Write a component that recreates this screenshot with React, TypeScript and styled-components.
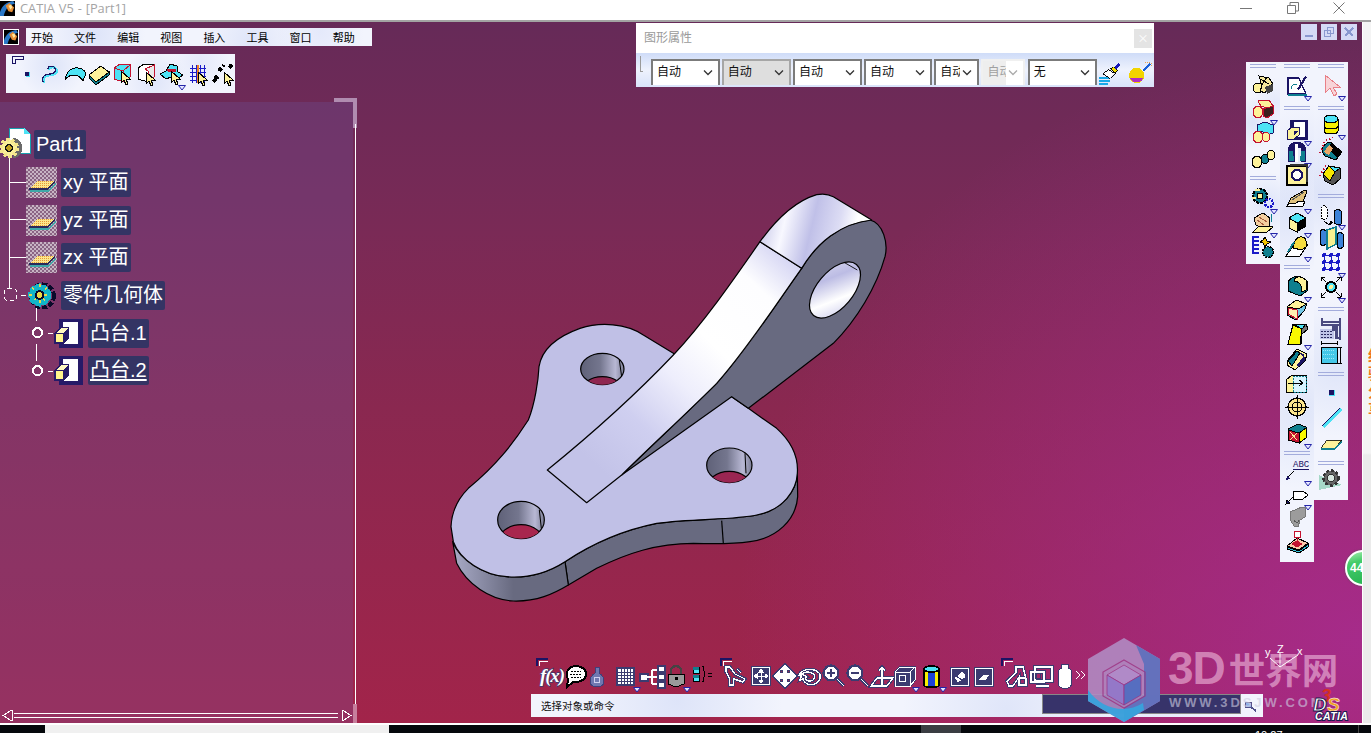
import React from 'react';
import styled, { createGlobalStyle } from 'styled-components';

const N = '#1b1464', K = '#000', C = '#4de3f5', Y = '#fdf29a', T = '#0f7f8f', R = '#c41230', W = '#fff', B = '#1a1ac8', D = '#3b3b70';
const SANS = '"Liberation Sans", "Noto Sans CJK SC", sans-serif';

const Global = createGlobalStyle`
  html, body { margin: 0; padding: 0; background: #fff; }
  body { font-family: ${SANS}; }
`;

const Page = styled.div`
  position: relative; width: 1371px; height: 733px; overflow: hidden;
  display: flex; flex-direction: column; background: #fff;
`;
const TitleBar = styled.header`
  height: 20px; flex: none; display: flex; align-items: center; background: #fff;
  border-bottom: 2px solid #a3a3a3;
`;
const TitleIcon = styled.svg`width: 15px; height: 15px; flex: none; margin-bottom: 4px;`;
const TitleText = styled.span`
  margin-left: 5px; font-size: 12.8px; color: #a4a4a4; white-space: pre; margin-bottom: 4px; word-spacing: .6px;
  font-family: "Open Sans", ${SANS};
`;
const WinGlyphs = styled.div`
  margin-left: auto; display: flex; align-items: center; height: 20px; width: 131px;
  margin-bottom: 4px;
`;
const WinGlyph = styled.svg<{ $ml: number }>`width: 12px; height: 12px; margin-left: ${p => p.$ml}px; flex: none;`;
const Main = styled.div`flex: 1; display: flex; min-height: 0;`;
const Viewport = styled.main`
  position: relative; width: 1362px; flex: none; overflow: hidden;
  background:
    radial-gradient(ellipse 46% 85% at 100% 88%, rgba(168,44,150,.84), rgba(168,44,150,0)),
    linear-gradient(180deg, #662a58 0%, #7a2a56 30%, #8a2850 55%, #a2244a 100%);
`;
const Strip = styled.aside`
  flex: 1; background: linear-gradient(90deg, #fff 0 1px, transparent 1px), linear-gradient(180deg, #f4f4f4 0 431px, #ebebeb 433px);
  position: relative; overflow: hidden;
`;
const StripNote = styled.div`
  position: absolute; left: 6px; top: 324px; width: 16px; color: #f07818; font-size: 15px; line-height: 18px; font-weight: 700;
  font-family: "Noto Sans CJK SC", sans-serif;
`;
const Bubble = styled.div`
  position: absolute; left: 1345px; top: 528px; width: 36px; height: 36px; border-radius: 50%;
  background: linear-gradient(165deg, #a8eeb0, #45cc6a 30%, #22b04e);
  border: 2px solid #fff; box-shadow: 0 0 2px #555; box-sizing: border-box;
  color: #fff; font-size: 12px; font-weight: 700; padding: 9px 0 0 3px; line-height: 14px;
`;
const Taskbar = styled.footer`
  height: 10px; flex: none; background: #05080c; border-top: 2px solid #fff; box-sizing: border-box;
  display: flex; overflow: hidden; color: #fff; font-size: 11px;
`;
const TaskBlank = styled.div`width: 344px; margin-left: 45px; background: #f0f0f0; flex: none;`;
const TaskActive = styled.div`width: 40px; margin-left: 532px; background: #3a3d42; flex: none;`;
const Clock = styled.div`margin-left: 294px; width: 103px; line-height: 13px; padding-top: 4px; border-right: 1px solid #444; flex: none;`;

const Mottled = `
  background:
    radial-gradient(circle at 20% 30%, rgba(205,215,245,.55), transparent 18%),
    radial-gradient(circle at 65% 70%, rgba(205,215,245,.5), transparent 22%),
    radial-gradient(circle at 85% 20%, rgba(215,222,248,.5), transparent 15%),
    #f2f4fd;
`;
const MenuIcon = styled.svg`position: absolute; left: 3px; top: 7px; width: 16px; height: 16px; border: 1px solid #fff; box-sizing: border-box;`;
const MenuBar = styled.nav`
  position: absolute; left: 26px; top: 6px; width: 346px; height: 18px; ${Mottled}
  display: flex; align-items: center; padding-left: 5px; gap: 21.1px; box-sizing: border-box;
`;
const MenuItem = styled.span`width: 22px; font-size: 11px; color: #000; white-space: nowrap; font-family: "Noto Sans CJK SC", sans-serif;`;

const HBar = styled.div<{ $l: number; $t: number; $w: number; $h: number; $light?: boolean }>`
  position: absolute; left: ${p => p.$l}px; top: ${p => p.$t}px; width: ${p => p.$w}px; height: ${p => p.$h}px;
  display: flex; align-items: center; ${p => p.$light ? Mottled : ''}
`;
const Corner = styled.svg<{ $t?: number; $l: number }>`
  position: absolute; left: ${p => p.$l}px; top: ${p => p.$t ?? 0}px; width: 13px; height: 9px;
`;
const Tool = styled.div<{ $mt?: number; $ml?: number; $s?: number }>`
  position: relative; flex: none; width: ${p => p.$s ?? 24}px; height: ${p => p.$s ?? 24}px;
  margin-top: ${p => p.$mt ?? 0}px; margin-left: ${p => p.$ml ?? 0}px;
  svg.ico { display: block; width: 100%; height: 100%; overflow: visible; }
`;
const Caret = styled.svg`position: absolute; right: -3px; bottom: -5px; width: 8px; height: 6px;`;

const Column = styled.div<{ $h: number }>`
  width: 34px; height: ${p => p.$h}px; ${Mottled} display: flex; flex-direction: column; align-items: center;
`;
const Sep = styled.div<{ $mt: number }>`
  width: 26px; height: 2px; flex: none; margin-top: ${p => p.$mt}px;
  border-top: 1px solid #a3acdc; border-bottom: 1px solid #a3acdc;
`;
const RightDock = styled.div`position: absolute; left: 1246px; top: 40px; display: flex; align-items: flex-start;`;

const WinBtns = styled.div`position: absolute; left: 1301px; top: 2px; display: flex; gap: 4px;`;
const WinBtn = styled.svg`width: 16px; height: 16px; background: #d5daf6;`;

const Panel = styled.section`
  position: absolute; left: 0; top: 80px; width: 353px; height: 621px;
  background: rgba(110,100,180,.22); padding-top: 24px; box-sizing: border-box;
  &::before {
    content: ''; position: absolute; left: 334px; top: -4px; width: 19px; height: 26px;
    border-top: 4px solid #b08cb0; border-right: 4px solid #b08cb0;
  }
  &::after {
    content: ''; position: absolute; left: 353px; top: 602px; width: 4px; height: 19px; background: #c77e9c;
  }
`;
const EdgeLine = styled.div`position: absolute; left: 355px; top: 22px; width: 1px; height: 580px; background: #fff;`;
const Tree = styled.ul`list-style: none; margin: 0; padding: 0; display: grid; grid-auto-rows: 37.7px; position: relative;`;
const TreeRow = styled.li<{ $indent: number }>`
  display: flex; align-items: center; padding-left: ${p => p.$indent}px; position: relative; min-width: 0;
`;
const TreeIcon = styled.svg<{ $w: number; $gap: number }>`
  width: ${p => p.$w}px; height: 31px; flex: none; margin-right: ${p => p.$gap}px; overflow: visible;
`;
const Label = styled.span<{ $under?: boolean }>`
  background: #343464; color: #fff; height: 29px; line-height: 29px; border-radius: 2px;
  font-size: 20px; padding: 0 2px; white-space: nowrap; font-family: ${SANS};
  text-decoration: ${p => p.$under ? 'underline' : 'none'}; text-underline-offset: 2px;
`;
const Links = styled.svg`position: absolute; left: 0; top: -126px; width: 100px; height: 400px; pointer-events: none;`;
const ScrollLine = styled.svg`position: absolute; left: 2px; bottom: 1px; width: 350px; height: 12px;`;

const PropBar = styled.div`
  position: absolute; left: 636px; top: 1px; width: 518px; height: 64px; display: flex; flex-direction: column;
`;
const PropHead = styled.div`
  height: 30px; background: #fff; display: flex; align-items: center; padding: 0 2px 0 8px; flex: none; box-sizing: border-box;
  font-size: 12px; color: #9a9a9a; font-family: "Noto Sans CJK SC", sans-serif;
`;
const PropTitle = styled.span`margin-top: -4px;`;
const PropClose = styled.div`
  margin-left: auto; width: 18px; height: 19px; background: #e4e4e4; color: #fff; text-align: center; line-height: 18px; font-size: 11px;
`;
const PropBody = styled.div`
  flex: 1; display: flex; align-items: flex-end; padding: 0 0 2px 15px; gap: 2.3px; position: relative;
  background: linear-gradient(180deg, #cfdcf8, #eef2fd 50%, #d9e3fa);
`;
const Grip = styled.i`position: absolute; left: 4px; top: 3px; height: 16px; border-left: 1px solid #9a9a9a; border-bottom: 1px solid #9a9a9a; width: 3px; box-sizing: border-box;`;
const Combo = styled.div<{ $w: number; $mode?: 'on' | 'off' }>`
  width: ${p => p.$w}px; height: 26px; box-sizing: border-box; flex: none; display: flex; align-items: center;
  border: 2px solid ${p => p.$mode === 'on' ? '#a6a6a6' : p.$mode === 'off' ? '#f0f0f0' : '#7b7b7b'}; border-bottom: 0;
  background: ${p => p.$mode === 'on' ? '#dedede' : '#fff'};
  color: ${p => p.$mode === 'off' ? '#a0a0a0' : '#111'}; font-size: 12px; font-family: "Noto Sans CJK SC", sans-serif;
`;
const ComboText = styled.span<{ $w: number; $mode?: 'on' | 'off' }>`
  width: ${p => p.$w}px; height: 100%; line-height: 19px; overflow: hidden; white-space: nowrap; padding-left: 4px; box-sizing: border-box; flex: none;
  background: ${p => p.$mode === 'off' ? '#eeeeee' : 'transparent'};
`;
const Chevron = styled.svg`width: 10px; height: 6px; margin-left: auto; margin-right: 5px; flex: none;`;

const Status = styled.div`
  position: absolute; left: 531px; top: 672px; width: 732px; height: 23px; ${Mottled}
  font-size: 10.5px; color: #111; display: flex; align-items: flex-start; padding: 4px 0 0 10px; box-sizing: border-box;
  font-family: "Noto Sans CJK SC", sans-serif;
`;
const StatusField = styled.div`
  position: absolute; left: 511px; top: 0; width: 199px; height: 20px; background: #37336a; border: 1px solid #fff; outline: 1px solid #888; outline-offset: -1px; box-sizing: border-box;
`;
const StatusSearch = styled.svg`position: absolute; left: 713px; top: 7px; width: 14px; height: 11px;`;

const Part = styled.svg`position: absolute; left: 440px; top: 158px; width: 460px; height: 430px;`;
const Compass = styled.svg`position: absolute; left: 1262px; top: 622px; width: 46px; height: 30px;`;
const Brand = styled.svg`position: absolute; left: 1310px; top: 665px; width: 44px; height: 34px; overflow: visible;`;

const Mark = styled.div`position: absolute; left: 1088px; top: 616px; width: 262px; height: 90px; pointer-events: none;`;
const MarkLogo = styled.svg`position: absolute; left: 0; top: 0; width: 74px; height: 84px;`;
const MarkName = styled.div`
  position: absolute; left: 80px; top: 4px; white-space: nowrap; line-height: 52px; color: rgba(248,205,232,.55); font-weight: 700; font-family: ${SANS};
  font-size: 46px; letter-spacing: -1px;
`;
const MarkCjk = styled.span`font-size: 36.5px; letter-spacing: 0; margin-left: 4px; font-family: "Noto Sans CJK SC", sans-serif;`;
const MarkUrl = styled.div`
  position: absolute; left: 81px; top: 57px; white-space: nowrap; color: rgba(205,205,225,.62); font-weight: 700; font-size: 13px; letter-spacing: 2.9px;
`;

const Cur = ({ x = 0, y = 0 }: { x?: number; y?: number }) => (
  <path d={`M${x} ${y}v12l3-3 2 5 2-1-2-5h4z`} fill={Y} stroke={K} />
);
const O = ({ d, f = 'none' }: { d: string; f?: string }) => (
  <>
    <path d={d} fill="none" stroke={D} strokeWidth="3.4" />
    <path d={d} fill={f} stroke={W} strokeWidth="1.3" />
  </>
);
const Ell = (cx: number, cy: number, rx: number, ry: number, f: string, s: string = K) => (
  <ellipse cx={cx} cy={cy} rx={rx} ry={ry} fill={f} stroke={s} />
);

const icons: Record<string, React.ReactNode> = {
  point: <><rect x="10" y="10" width="4" height="4" fill={N} /><path d="M14.5 10v4.5h-4" stroke={C} fill="none" /></>,
  curve: <><path d="M5 21c-2-6 3-8 7-8s7-3 5-6-7-2-7 1" fill="none" stroke={C} strokeWidth="2.4" /><path d="M4 20c-2-6 3-8 7-8s7-3 5-6-7-2-7 1" fill="none" stroke={N} strokeWidth="1.3" /></>,
  surface: <path d="M2 18C3 9 10 5 15 6c4 0 6 2 8 5l-3 8c-3-5-6-6-9-6-4 0-7 2-9 5z" fill={C} stroke={K} />,
  plane: <><path d="M2 13l12-9 8 6-13 10z" fill={Y} stroke={K} /><path d="M9 20l13-10v3L9 23 2 16v-3z" fill={T} stroke={K} /></>,
  sel1: <><path d="M4 6l6-4h10v13l-6 5-10-3z" fill={C} stroke={R} /><path d="M4 6l9 3v11M13 9l7-6" stroke={R} fill="none" /><Cur x={11} y={9} /></>,
  sel2: <><path d="M4 6l6-4h10v13l-6 5-10-3z" fill={W} stroke={K} /><path d="M11 7l9-4v12l-6 5V9z" fill="#e8e8e8" stroke={R} /><Cur x={12} y={10} /></>,
  sel3: <><path d="M1 12l6-3 4-7 7 2 1 6 5 3-7 5-5-3-5 2z" fill={C} stroke={K} /><path d="M8 7h9v3H9z" fill={R} /><Cur x={12} y={9} /></>,
  mesh: <><path d="M4 6h16M4 10h16M4 14h16M4 18h16M6 3v18M10 3v18M14 3v18M18 3v18" stroke={B} fill="none" /><path d="M12 3v18" stroke="#f08020" strokeWidth="1.5" /><Cur x={12} y={10} /></>,
  dots: <><path d="M2 20l5-5M8 9l5-6M18 3l4 3M4 14l4 4" stroke={K} strokeWidth="4" strokeDasharray="4 2" fill="none" /><Cur x={13} y={10} /></>,

  a1: <>{Ell(7, 15, 5, 5, Y)}<path d="M8 3l10 2 4 6-5 3-3 6-5-2 2-5z" fill="#f5e79c" stroke={K} /><path d="M9 6l9 5M16 4l-6 9" stroke={K} /><path d="M14 14l8-3v7l-6 3z" fill="#444" /></>,
  a2: <>{Ell(7, 15, 5, 6, Y, R)}<path d="M7 4l11-1 4 6-4 3-8-3z" fill={Y} stroke={R} /><path d="M12 12l10-3v8l-6 4-4-2z" fill="#3a2020" stroke={R} /></>,
  a3: <><path d="M6 4l8-3 8 3v8l-6 2-4-3-6-1z" fill={C} stroke={N} />{Ell(7, 16, 5, 6, Y, R)}{Ell(15, 16, 4, 5, Y, R)}</>,
  a4: <>{Ell(6, 16, 5, 6, Y)}{Ell(14, 13, 4, 5, T)}{Ell(20, 9, 4, 5, Y)}</>,
  a5: <><circle cx="9" cy="10" r="7" fill={T} stroke={K} strokeDasharray="3 1" strokeWidth="2" /><circle cx="9" cy="10" r="3" fill={Y} stroke={K} /><circle cx="18" cy="17" r="4" fill="none" stroke={B} strokeWidth="2.4" strokeDasharray="2 1" /><path d="M4 4h5M1 12h4" stroke={Y} strokeWidth="2" /></>,
  a6: <><path d="M3 8l9-5 7 5-1 8-6 3-7-4z" fill="#f4cfa0" stroke={K} /><path d="M6 10l7 5M8 7l8 5" stroke="#a86040" fill="none" /><path d="M2 22l6-6 14 1-6 5z" fill={Y} stroke={K} /><path d="M20 4v8" stroke={T} /></>,
  a7: <><path d="M1 3h7M1 7h7M1 11h7M1 15h7M1 19h7M2 3v16" stroke={B} fill="none" strokeWidth="1.2" /><path d="M14 3l2 4 4 1-4 2-2 3-2-4-3-1 3-2z" fill="#f3c400" stroke={K} /><circle cx="17" cy="18" r="5.5" fill={T} stroke={K} strokeDasharray="2 1" strokeWidth="1.6" /></>,

  sketch: <><path d="M3 21V5h11l7 16z" fill={W} stroke={N} strokeWidth="1.2" /><path d="M3 22h19" stroke={T} strokeWidth="1.5" /><path d="M6 16a4 4 0 0 1 6-4" fill="none" stroke={T} /><path d="M12 16L20 3l2 1-8 13z" fill={N} /></>,
  pad: <><rect x="5" y="2" width="18" height="20" fill={N} /><rect x="9" y="4" width="11" height="15" fill={W} /><path d="M2 13l5-4h7v8l-5 4H2z" fill={Y} stroke={N} /><path d="M9 13h5l-5 4z" fill={N} /></>,
  pocket: <><path d="M3 22V9c0-4 3-7 9-7s9 3 9 7v13h-5V8h-3v14z" fill={N} /><path d="M4 21V11h4l1 10zM15 21l1-10h4v10z" fill={T} /><path d="M10 4v18h3V4z" fill="#fff" /></>,
  hole: <><path d="M2 4h20v19H2z" fill={Y} stroke={K} strokeWidth="1.6" /><path d="M5 2h18v18h-2V4H5z" fill="#333" /><circle cx="12" cy="13" r="5" fill={W} stroke={N} strokeWidth="2.4" /></>,
  rib: <><path d="M2 20l4-8 14-8 2 1-5 14z" fill="#e0c27c" stroke={K} /><path d="M2 20l3-3h6l3-2h6l-2 5z" fill={W} stroke={K} /><path d="M7 14l12-8" stroke="#555" /></>,
  cube: <><path d="M4 8l8-5 9 5-9 5z" fill={C} stroke={K} /><path d="M4 8l8 5v9l-8-4z" fill={Y} stroke={K} /><path d="M12 13l9-5v9l-9 5z" fill={K} /></>,
  loft: <><path d="M1 22l9-12h13l-8 12z" fill={W} stroke={K} /><path d="M8 14C9 7 12 2 17 3c4 0 5 5 4 10l-4 3-9-2z" fill="#f5dc40" stroke={K} /><path d="M3 18L9 8" stroke={T} strokeWidth="2" /></>,
  tealy: <><path d="M3 10c0-5 6-8 11-8l8 5v10l-7 5-12-5z" fill={T} stroke={K} /><path d="M9 5c3-3 8-3 12 1v10l-4 2-1-6c-1-3-3-5-7-4z" fill={Y} stroke={K} /></>,
  chamfer: <><path d="M2 9l9-7 11 4-3 7-8 9-9-5z" fill="#72c8e8" stroke={K} /><path d="M2 9l9-7 11 4-9 5z" fill={Y} stroke={K} /><path d="M3 10l9 2v9l-9-5z" fill="#ffefb0" stroke={R} /></>,
  draft: <><path d="M8 2h13l2 5-6 5-1 10H3z" fill="#777" stroke={K} /><path d="M8 3l9 4-2 15H3z" fill="#f9f900" stroke={K} /><path d="M8 2h13l-4 5z" fill={C} stroke={K} /></>,
  shell: <><path d="M2 14L12 2l10 5-2 7-10 9-8-5z" fill={Y} stroke={K} /><path d="M3 14L12 4l3 2-8 13z" fill={T} stroke={K} /><path d="M12 18l6-8-3-4 4 1 1 6-7 7z" fill={N} /></>,
  thick: <><path d="M1 9l6-5h14v17H1z" fill={Y} stroke={K} /><path d="M8 5h13v16H8z" fill="#d8f4ff" stroke={T} strokeDasharray="2 1" /><path d="M3 12h14M14 9l4 3-4 3" stroke={K} fill="none" /></>,
  target: <><circle cx="12" cy="12" r="9" fill="#fbe48c" stroke={K} strokeWidth="1.4" /><circle cx="12" cy="12" r="5" fill="none" stroke={K} /><path d="M12 0v24M0 12h24" stroke={K} /></>,
  boxx: <><path d="M3 8l10-5 8 3v5l-8 6-10-3z" fill={T} stroke={K} /><path d="M3 9l11 3v10L3 19z" fill={R} stroke={K} /><path d="M14 12l7-5v10l-7 5z" fill="#f9f900" stroke={K} /><path d="M5 11l7 8M12 12l-7 7" stroke={Y} /></>,
  abc: <><path d="M3 19l6-6" stroke={K} /><path d="M1 22l4-1-3-3z" fill={N} /><text x="8" y="9" fontSize="9" fontFamily="Liberation Mono, monospace" fill={N}>ABC</text><path d="M8 11h16" stroke={N} /></>,
  tag: <><path d="M1 22l4-1-3-3zM3 20l5-5" fill={N} stroke={K} /><path d="M8 9h10l5 4-5 4H8z" fill={W} stroke={K} /></>,
  hand: <><path d="M5 8l12-5 4 1-1 9-5 3-2 7-4-1-3-5-1-6z" fill="#9c9c9c" stroke="#777" /><path d="M9 16c1 3 5 3 5 0" fill="none" stroke="#555" /></>,
  pin: <><path d="M2 17l10-8 11 5-9 7z" fill="#f8c8a8" stroke={K} /><path d="M2 18l12 4 9-7v3l-9 6-12-4z" fill="#35c0d8" stroke={K} /><rect x="9" y="2" width="6" height="6" fill={W} stroke={R} /><path d="M12 8v7M7 15l5-3 5 3-5 3z" fill={R} stroke={R} /></>,

  pink: <><path d="M6 2v18l5-5 4 8 3-2-4-7h7z" fill="#f8d4d8" stroke="#e88088" /></>,
  cyl: <><path d="M5 7v12c0 4 14 4 14 0V7z" fill="#f6f000" stroke={K} /><path d="M5 14c0 4 14 4 14 0" fill="none" stroke={K} /><ellipse cx="12" cy="7" rx="7" ry="4" fill={C} stroke={K} /></>,
  fillet: <><path d="M3 14c0-6 4-9 8-10l12 10-6 8-11-4z" fill={T} stroke={K} /><path d="M12 4l11 10-5 6-8-9z" fill={K} /><path d="M5 14l5-7 4 3-4 7z" fill="#e8a868" /><path d="M1 15L6 3l8-3" stroke={R} strokeWidth="2" strokeDasharray="1.5 2" fill="none" /></>,
  fil2: <><path d="M4 12l6-8 11 2v11l-7 6-8-4z" fill="#555" stroke={K} /><path d="M4 12l6-8 6 6-5 9z" fill="#f6e800" stroke={K} /><path d="M10 4l11 2-5 4z" fill={C} stroke={K} /><path d="M1 14L7 3" stroke={R} strokeWidth="2" strokeDasharray="1.5 2" /></>,
  trans: <><path d="M2 6l3-3 3 3v10l-3 2-3-2z" fill={W} stroke={K} strokeDasharray="2 1" /><path d="M15 9l4-2 3 2v13l-3 1-4-2z" fill="#3a82d8" stroke={K} /><path d="M5 19l5 4 3-2" stroke={K} fill="none" /><path d="M12 18l2 3-4 1z" fill={K} /></>,
  mirror: <><path d="M1 5l3-2 3 2v13l-3 2-3-2z" fill="#3a82d8" stroke={K} /><path d="M8 4l9-3v17l-9 5z" fill="#f6f090" stroke={T} strokeWidth="1.4" /><path d="M18 8l3-2 3 2v13l-3 2-3-2z" fill="#3a82d8" stroke={K} /></>,
  pattern: <><path d="M5 5h14v14H5zM5 12h14M12 5v14" fill="none" stroke={B} /><path d="M5 5h.01M12 5h.01M19 5h.01M5 12h.01M12 12h.01M19 12h.01M5 19h.01M12 19h.01M19 19h.01" stroke={B} strokeWidth="4" strokeLinecap="round" /></>,
  scale: <><circle cx="12" cy="12" r="5" fill={C} stroke={K} strokeWidth="2" /><circle cx="12" cy="12" r="2" fill={Y} /><path d="M2 2l5 5M22 2l-5 5M2 22l5-5M22 22l-5-5M2 2h4M2 2v4M22 2h-4M22 2v4M2 22h4M2 22v-4M22 22h-4M22 22v-4" stroke={K} fill="none" /></>,
  meas: <><path d="M3 2v8M21 2v22M3 6h18M3 9h18" stroke="#4a4a80" strokeWidth="1.6" fill="none" /><path d="M1 13h14v10H1z" fill="#bfc4e8" /><path d="M2 15h12M2 18h12M2 21h12" stroke="#2a2a60" strokeDasharray="2 1" /><path d="M13 9v6h3v8h6v-2h-3V9z" fill="#4a4a80" /></>,
  meas2: <><rect x="2" y="7" width="16" height="16" fill="#45c8e8" stroke={K} /><path d="M2 3h16M2 1v4M18 1v4M21 7v16M19 7h4M19 23h4" stroke={K} fill="none" /><path d="M4 10h12M4 14h12M4 18h12" stroke="#9ee8f8" strokeDasharray="1 1" /></>,
  pt: <><rect x="10" y="10" width="5" height="5" fill={N} /><path d="M15.5 10v5.5H10" stroke={C} fill="none" /></>,
  ln: <><path d="M4 22L22 4" stroke={C} strokeWidth="3" /><path d="M3 21L21 3" stroke={N} strokeWidth="1.4" /></>,
  pl: <><path d="M2 19l6-8h15l-7 8z" fill={Y} stroke={K} strokeWidth=".8" /><path d="M2 20h14l7-8" stroke={T} fill="none" strokeWidth="1.4" /></>,
  gear: <><path d="M0 24L0 9l23 10z" fill="#a6d8c8" /><circle cx="12" cy="12" r="7.5" fill="#666" stroke="#333" strokeWidth="2.4" strokeDasharray="3 2" /><circle cx="12" cy="12" r="3.4" fill="#d8e8e0" stroke="#333" /></>,

  fx: <text x="-1" y="18" fontFamily="Liberation Serif, serif" fontStyle="italic" fontWeight="700" fontSize="19" fill={W} stroke={D} strokeWidth="1.4" paintOrder="stroke" textLength="25">f(x)</text>,
  bubble: <><path d="M3 10c0-5 4-8 9-8s10 3 10 8-5 8-10 8H9l-6 5 1-7c-1-2-1-4-1-6z" fill={W} stroke={K} strokeWidth="2" /><path d="M7 7h10M6 10h12M7 13h10" stroke={K} strokeDasharray="2 1" /></>,
  bottle: <><path d="M10 3h4v6c3 2 5 4 5 8s-3 6-7 6-7-2-7-6 2-6 5-8z" fill="#7078b0" stroke="#40407a" /><circle cx="12" cy="16" r="3" fill="none" stroke="#d0d0f0" /></>,
  grid: <><rect x="2" y="3" width="19" height="19" fill={D} /><rect x="4" y="5" width="15" height="15" fill={W} /><path d="M4 8h15M4 11h15M4 14h15M4 17h15M7 5v15M10 5v15M13 5v15M16 5v15" stroke={D} /></>,
  flow: <><rect x="-1" y="10" width="8" height="7" fill={W} stroke={D} strokeWidth="2" /><path d="M6 13h5M11 6v14M11 6h7M11 13h7M11 20h7" stroke={W} fill="none" strokeWidth="1.2" /><rect x="17" y="2" width="7" height="6" fill={W} stroke={D} strokeWidth="2" /><rect x="17" y="10" width="7" height="6" fill={W} stroke={D} strokeWidth="2" /><rect x="17" y="18" width="7" height="6" fill={W} stroke={D} strokeWidth="2" /></>,
  lock: <><path d="M7 10V6c0-5 10-5 10 0v4" fill="none" stroke="#444" strokeWidth="2.4" /><path d="M4 10h16v10l-8 3-8-3z" fill="#9a9a9a" stroke={K} /><rect x="11" y="13" width="3" height="3" fill={K} /></>,
  list: <><rect x="3" y="3" width="6" height="6" fill={C} stroke={K} /><rect x="3" y="11" width="6" height="6" fill={C} stroke={K} /><rect x="3" y="3" width="6" height="3" fill={T} /><rect x="3" y="11" width="6" height="3" fill={T} /><path d="M3 20h.01M6 20h.01M9 20h.01" stroke={K} strokeWidth="1.2" /><path d="M12 2c3 0 1 6 3 8-2 2 0 8-3 8" fill="none" stroke={K} /><path d="M18 9h4M18 12h4" stroke={K} /></>,
  air: <O d="M1 3l4 0 5 7 10 5-2 3-9-3-1 6-3 0-1-8L1 8z M12 5l4 4" />,
  fit: <><rect x="2" y="2" width="20" height="20" fill={D} /><rect x="3.5" y="3.5" width="17" height="17" fill={D} stroke={W} /><path d="M12 5v14M5 12h14M12 5l-2 3h4zM12 19l-2-3h4zM5 12l3-2v4zM19 12l-3-2v4z" fill={W} stroke={W} /></>,
  pan: <O f={W} d="M12 1l4 4h-3v5h5V7l5 5-5 5v-3h-5v5h3l-4 4-4-4h3v-5H6v3l-5-5 5-5v3h5V5H8z" />,
  rot: <O d="M1 11c3-6 14-8 20-2 3 4 0 9-4 11-6 2-11-1-12-5l-3 1 2-6 5 3-2 1c1 3 5 4 8 2 3-3 2-6-1-7-4-2-9-1-11 2z" />,
  zin: <><O d="M15 15l7 7" /><circle cx="9" cy="9" r="7.4" fill={W} stroke={D} strokeWidth="2.4" /><path d="M5 9h8M9 5v8" stroke={D} strokeWidth="2" /></>,
  zout: <><O d="M15 15l7 7" /><circle cx="9" cy="9" r="7.4" fill={W} stroke={D} strokeWidth="2.4" /><path d="M5 9h8" stroke={D} strokeWidth="2" /></>,
  normal: <O d="M1 22l6-8h16l-6 8z M12 22V4 M9 7l3-4 3 4" />,
  box3: <><path d="M2 8l5-5h15v13l-5 6H2z" fill={D} stroke={D} strokeWidth="2.4" /><path d="M2 8h15v14H2zM2 8l5-5h15v13l-5 6M17 8l5-5" fill="none" stroke={W} /><rect x="6" y="11" width="6" height="6" fill="none" stroke={W} /></>,
  can: <><path d="M4 5v16c0 3 15 3 15 0V5z" fill="#f6f000" stroke={K} strokeWidth="1.6" /><path d="M8 6h7v16H8z" fill="#1a42d8" /><ellipse cx="11.5" cy="5" rx="7.5" ry="3" fill={C} stroke={K} strokeWidth="1.6" /></>,
  shade1: <><rect x="2" y="3" width="20" height="20" fill={D} /><rect x="3.5" y="4.5" width="17" height="17" fill="none" stroke={W} /><path d="M6 14l8-7 4 3-1 4-7 5z" fill={W} stroke={D} /><path d="M8 12l6 4" stroke={D} /></>,
  shade2: <><rect x="2" y="3" width="20" height="20" fill={D} /><rect x="3.5" y="4.5" width="17" height="17" fill="none" stroke={W} /><path d="M6 16l6-6h7l-5 6z" fill={W} stroke={D} /></>,
  note: <O d="M2 17l9-8V3h7l3 12v6h-7v-8l-6 9H4z M14 14h7" />,
  sheet: <><O d="M5 3h17v14H5z M1 8h13v10H1z M6 22h13" /><circle cx="8" cy="12" r="3" fill="none" stroke={D} /></>,
  canw: <O f={W} d="M6 7c0-3 10-3 10 0v14c0 3-10 3-10 0z M9 2h4v3H9z" />,
  more: <path d="M4 7l4 4-4 4M9 7l4 4-4 4" stroke={W} fill="none" />,
};

const Glyph = ({ name }: { name: string }) => (
  <svg className="ico" viewBox="0 0 24 24" shapeRendering="crispEdges">{icons[name]}</svg>
);
const CaretMark = () => (
  <Caret viewBox="0 0 8 6"><path d="M.5.5h7L4 5z" fill="#e4e6ff" stroke="#2424a8" /></Caret>
);
const Comet = () => (
  <>
    <rect width="16" height="16" fill="#000" />
    <path d="M0 12C2 5 7 1 14 0l2 3C10 4 6 8 4 16H0z" fill="#2a78c8" />
    <path d="M6 5l4-3 5 5-2 5-4-1z" fill="#e89038" />
    <path d="M9 5l3-1 1 3-2 2z" fill="#ffe9a0" />
  </>
);

type Entry = [string, number, boolean?];

const renderColumn = (items: Entry[], top: number) => {
  let y = top;
  return items.map(([name, cy, caret], i) => {
    if (name === '-') {
      const mt = cy - 2 - y; y = cy + 2;
      return <Sep key={i} $mt={mt} />;
    }
    const mt = cy - 12 - y; y = cy + 12;
    return <Tool key={i} $mt={mt}><Glyph name={name} />{caret && <CaretMark />}</Tool>;
  });
};
const renderRow = (items: Entry[], left: number) => {
  let x = left;
  return items.map(([name, cx, caret], i) => {
    const ml = cx - 12 - x; x = cx + 12;
    return <Tool key={i} $ml={ml}><Glyph name={name} />{caret && <CaretMark />}</Tool>;
  });
};

const col1: Entry[] = [['-', 66], ['a1', 85], ['a2', 109, true], ['a3', 133], ['a4', 158], ['-', 178], ['a5', 198, true], ['a6', 222, true], ['a7', 246]];
const col2: Entry[] = [['-', 66], ['sketch', 85, true], ['-', 108], ['pad', 130, true], ['pocket', 152, true], ['hole', 174], ['rib', 198, true], ['cube', 222, true], ['loft', 246, true], ['-', 267], ['tealy', 286, true], ['chamfer', 310], ['draft', 334, true], ['shell', 359], ['thick', 383], ['target', 407], ['boxx', 433, true], ['-', 453], ['abc', 470, true], ['tag', 494, true], ['hand', 516], ['pin', 541]];
const col3: Entry[] = [['-', 66], ['pink', 85, true], ['-', 108], ['cyl', 124, true], ['fillet', 150], ['fil2', 174], ['-', 196], ['trans', 214, true], ['mirror', 238], ['pattern', 262, true], ['scale', 287, true], ['-', 309], ['meas', 328], ['meas2', 352], ['-', 374], ['pt', 392], ['ln', 417], ['pl', 441], ['-', 463], ['gear', 478]];

const topTools: Entry[] = [['point', 27], ['curve', 51], ['surface', 75], ['plane', 99], ['sel1', 122], ['sel2', 146], ['sel3', 171, true], ['mesh', 198], ['dots', 223]];
const dockTools: Entry[] = [['fx', 553], ['bubble', 576], ['bottle', 597], ['grid', 626, true], ['flow', 653], ['lock', 676, true], ['list', 702], ['air', 737], ['fit', 761], ['pan', 785], ['rot', 810], ['zin', 834], ['zout', 858], ['normal', 882], ['box3', 905, true], ['can', 932, true], ['shade1', 960], ['shade2', 984], ['note', 1017], ['sheet', 1042], ['canw', 1066], ['more', 1084]];

const menus = ['开始', '文件', '编辑', '视图', '插入', '工具', '窗口', '帮助'];
const combos: { w: number; t: string; tw?: number; mode?: 'on' | 'off' }[] = [
  { w: 68.5, t: '自动' }, { w: 69, t: '自动', mode: 'on' }, { w: 68.5, t: '自动' }, { w: 68, t: '自动' },
  { w: 45, t: '自动', tw: 24 }, { w: 44, t: '自动', tw: 23, mode: 'off' }, { w: 69, t: '无' },
];

const PartIcon = () => (
  <TreeIcon as="svg" viewBox="0 0 31 31" $w={31} $gap={3} shapeRendering="crispEdges">
    <path d="M9 -1h15l6 6v19H9z" fill="#fff" stroke="#18a0b0" />
    <path d="M24 -1l6 6h-6z" fill="#4de3f5" />
    <path d="M13 9a9 9 0 0 1 9 10 9 9 0 0 1-9 10z" fill="#6a6a6a" />
    <circle cx="9" cy="19" r="8" fill="#fbf09a" stroke="#f4e68c" strokeWidth="4" strokeDasharray="3 2" />
    <circle cx="9" cy="19" r="3.4" fill="#c0a020" stroke="#111" strokeWidth="1.4" />
  </TreeIcon>
);
const PlaneIcon = () => (
  <TreeIcon as="svg" viewBox="0 0 31 31" $w={31} $gap={4} shapeRendering="crispEdges">
    <defs>
      <pattern id="chk" width="4" height="4" patternUnits="userSpaceOnUse">
        <rect width="4" height="4" fill="#c8b4c4" />
        <rect width="2" height="2" fill="#8a6484" />
        <rect x="2" y="2" width="2" height="2" fill="#8a6484" />
      </pattern>
      <pattern id="pla" width="2" height="2" patternUnits="userSpaceOnUse">
        <rect width="2" height="2" fill="#fbe88c" />
        <rect width="1" height="1" fill="#e89838" />
      </pattern>
    </defs>
    <rect width="31" height="31" fill="url(#chk)" />
    <path d="M4 21l8-7h17l-8 7z" fill="url(#pla)" />
    <path d="M3 22h18l8-7" fill="none" stroke="#2a2a5a" strokeWidth="1.5" />
    <path d="M4 24h18l8-7" fill="none" stroke="#3fa8a8" strokeWidth="1.5" />
  </TreeIcon>
);
const BodyIcon = () => (
  <TreeIcon as="svg" viewBox="0 0 29 29" $w={28} $gap={6} shapeRendering="crispEdges">
    <circle cx="16" cy="15" r="12" fill="none" stroke="#0a0a2a" strokeWidth="4" strokeDasharray="5 2" />
    <circle cx="13" cy="14" r="11" fill="#12b4c8" stroke="#12b4c8" strokeWidth="2" strokeDasharray="5 3" />
    <path d="M13 3v22M2 14h22M5 6l16 16M21 6L5 22" stroke="#ecd848" strokeWidth="2" strokeDasharray="3 5" />
    <circle cx="13" cy="14" r="4" fill="#ecd848" stroke="#0a0a2a" strokeWidth="2" />
  </TreeIcon>
);
const PadIcon = () => (
  <TreeIcon as="svg" viewBox="0 0 29 29" $w={29} $gap={5} shapeRendering="crispEdges">
    <rect x="5" y="0" width="24" height="29" fill="#261a68" />
    <rect x="9" y="3" width="15" height="22" fill="#fff" />
    <path d="M0 14l6-6h9v11l-5 6H0z" fill="#261a68" />
    <path d="M2 14l5-5h7l-4 5z" fill="#fff8c0" />
    <rect x="2" y="15" width="7" height="8" fill="#fff48c" />
  </TreeIcon>
);

export default function App() {
  return (
    <Page>
      <Global />
      <TitleBar>
        <TitleIcon viewBox="0 0 16 16"><Comet /></TitleIcon>
        <TitleText>CATIA V5 - [Part1]</TitleText>
        <WinGlyphs>
          <WinGlyph $ml={0} viewBox="0 0 12 12"><path d="M0 6.5h12" stroke="#777" /></WinGlyph>
          <WinGlyph $ml={35} viewBox="0 0 12 12"><path d="M.5 3.5h8v8h-8zM3 3V.5h8.5V9H9" fill="none" stroke="#777" /></WinGlyph>
          <WinGlyph $ml={34} viewBox="0 0 12 12"><path d="M.5.5l11 11M11.5.5l-11 11" stroke="#777" /></WinGlyph>
        </WinGlyphs>
      </TitleBar>
      <Main>
        <Viewport>
          <MenuIcon viewBox="0 0 16 16"><Comet /></MenuIcon>
          <MenuBar>{menus.map(m => <MenuItem key={m}>{m}</MenuItem>)}</MenuBar>

          <HBar $l={6} $t={32} $w={229} $h={39} $light>
            <Corner $l={5} $t={1} viewBox="0 0 13 9" shapeRendering="crispEdges"><path d="M1 8V1h11v3H4v4z" fill="none" stroke="#1b1464" /></Corner>
            {renderRow(topTools, 6)}
          </HBar>

          <Panel>
            <EdgeLine />
            <Tree>
              <Links viewBox="0 0 100 400" shapeRendering="crispEdges">
                <path d="M9.5 156v132M10 182.5h17M10 219.5h17M10 257.5h17M36.5 307v14M36.5 344v17M21 295.5h5M48 333.5h5M48 371.5h5" stroke="#fff" fill="none" strokeWidth="1" />
                <rect x="4.5" y="288.5" width="12" height="12" rx="3" fill="none" stroke="#fff" strokeDasharray="4 3" />
                <circle cx="37.5" cy="332.5" r="4.5" fill="none" stroke="#fff" strokeWidth="2" />
                <circle cx="37.5" cy="370.5" r="4.5" fill="none" stroke="#fff" strokeWidth="2" />
              </Links>
              <TreeRow $indent={0}><PartIcon /><Label>Part1</Label></TreeRow>
              <TreeRow $indent={26}><PlaneIcon /><Label>xy 平面</Label></TreeRow>
              <TreeRow $indent={26}><PlaneIcon /><Label>yz 平面</Label></TreeRow>
              <TreeRow $indent={26}><PlaneIcon /><Label>zx 平面</Label></TreeRow>
              <TreeRow $indent={27}><BodyIcon /><Label>零件几何体</Label></TreeRow>
              <TreeRow $indent={54}><PadIcon /><Label>凸台.1</Label></TreeRow>
              <TreeRow $indent={54}><PadIcon /><Label $under>凸台.2</Label></TreeRow>
            </Tree>
            <ScrollLine viewBox="0 0 350 12" shapeRendering="crispEdges">
              <path d="M12 3.5h324M12 7.5h324" stroke="#fff" />
              <path d="M1 5.5l8-5h1v10H9zM349 5.5l-8-5h-1v10h1z" fill="none" stroke="#fff" />
            </ScrollLine>
          </Panel>

          <PropBar>
            <PropHead><PropTitle>图形属性</PropTitle><PropClose>×</PropClose></PropHead>
            <PropBody>
              <Grip />
              {combos.map((c, i) => (
                <Combo key={i} $w={c.w} $mode={c.mode}>
                  <ComboText $w={c.tw ?? 40} $mode={c.mode}>{c.t}</ComboText>
                  <Chevron viewBox="0 0 10 6"><path d="M1 .5l4 4 4-4" fill="none" stroke={c.mode === 'off' ? '#aaa' : '#333'} strokeWidth="1.3" /></Chevron>
                </Combo>
              ))}
              <Tool $s={23} $ml={-1}>
                <svg className="ico" viewBox="0 0 24 24" shapeRendering="crispEdges">
                  <path d="M1 17h11M1 20h11M1 23h9" stroke="#18a8e8" strokeWidth="2" />
                  <path d="M5 12l7 5 5-5-6-4z" fill="#fff" stroke="#000" />
                  <path d="M13 7l5 5 2-3-4-4z" fill="#f3e000" stroke="#000" />
                  <path d="M17 5l4-4 2 2-4 5z" fill="#1818b8" />
                </svg>
              </Tool>
              <Tool $s={23} $ml={6}>
                <svg className="ico" viewBox="0 0 24 24" shapeRendering="crispEdges">
                  <circle cx="8" cy="14" r="8" fill="#f2d500" />
                  <path d="M1 17a8 8 0 0 0 14 0z" fill="#b030c0" />
                  <path d="M14 8l7-7 2 2-7 7z" fill="#1860d8" />
                  <path d="M17 1h6v3" stroke="#e8a048" fill="none" strokeDasharray="1 1" />
                </svg>
              </Tool>
            </PropBody>
          </PropBar>

          <WinBtns>
            <WinBtn viewBox="0 0 16 16" shapeRendering="crispEdges"><path d="M4 11h8v2H4z" fill="#8a98d0" /></WinBtn>
            <WinBtn viewBox="0 0 16 16" shapeRendering="crispEdges"><path d="M6.5 3.5h6v6h-6zM3.5 6.5h6v6h-6z" fill="none" stroke="#8a98d0" strokeWidth="1.5" /></WinBtn>
            <WinBtn viewBox="0 0 16 16" shapeRendering="crispEdges"><path d="M4 4l8 8M12 4l-8 8" stroke="#8a98d0" strokeWidth="2" /></WinBtn>
          </WinBtns>

          <RightDock>
            <Column $h={202}>{renderColumn(col1, 62)}</Column>
            <Column $h={500}>{renderColumn(col2, 62)}</Column>
            <Column $h={438}>{renderColumn(col3, 62)}</Column>
          </RightDock>

          <Part viewBox="0 0 1380 1290" strokeLinejoin="round">
            <defs>
              <linearGradient id="armG" gradientUnits="userSpaceOnUse" x1="470" y1="860" x2="1040" y2="240">
                <stop offset="0" stopColor="#c3c3e8" />
                <stop offset=".22" stopColor="#cfcff0" />
                <stop offset=".42" stopColor="#eeeefc" />
                <stop offset=".6" stopColor="#ffffff" />
                <stop offset=".86" stopColor="#fdfdff" />
                <stop offset="1" stopColor="#d8d8f4" />
              </linearGradient>
              <linearGradient id="capG" gradientUnits="userSpaceOnUse" x1="990" y1="110" x2="1240" y2="170">
                <stop offset="0" stopColor="#d8d8f0" />
                <stop offset=".18" stopColor="#f8f8ff" />
                <stop offset=".5" stopColor="#c0c0e8" />
                <stop offset=".8" stopColor="#dcdcf4" />
                <stop offset="1" stopColor="#ffffff" />
              </linearGradient>
              <linearGradient id="wallG" gradientUnits="userSpaceOnUse" x1="40" y1="0" x2="220" y2="0">
                <stop offset="0" stopColor="#a8aac6" />
                <stop offset="1" stopColor="#686a80" />
              </linearGradient>
              <linearGradient id="boreG" x1="0" y1="1" x2="1" y2="0">
                <stop offset="0" stopColor="#c8c8ec" />
                <stop offset=".35" stopColor="#ffffff" />
                <stop offset=".7" stopColor="#bcbce4" />
                <stop offset="1" stopColor="#d8d8f0" />
              </linearGradient>
              <linearGradient id="holeG" x1="0" y1="0" x2="1" y2="0">
                <stop offset="0" stopColor="#5f6178" />
                <stop offset=".45" stopColor="#74768e" />
                <stop offset=".8" stopColor="#b8b8d4" />
                <stop offset="1" stopColor="#7a7c94" />
              </linearGradient>
              <clipPath id="h1"><ellipse cx="487" cy="567" rx="65" ry="47" /></clipPath>
              <clipPath id="h2"><ellipse cx="868" cy="856" rx="68" ry="52" /></clipPath>
              <clipPath id="h3"><ellipse cx="243" cy="1020" rx="70" ry="56" /></clipPath>
            </defs>
            <g stroke="#000" strokeWidth="3.6">
              <path fill="#686a80" d="M375 1145C450 1095 550 1050 650 1030C760 1015 880 1020 950 1005C1030 990 1070 930 1072 880L1073 950C1068 1020 1010 1075 930 1085C880 1092 820 1092 760 1090C650 1090 560 1120 470 1165L385 1215Z" />
              <path fill="url(#wallG)" d="M38 1085C60 1140 130 1185 200 1190C260 1195 320 1180 375 1145L385 1215C340 1242 290 1265 220 1263C150 1260 80 1212 50 1150Z" />
              <path d="M845 1022L850 1090" fill="none" />

              <path fill="#c0c0e6" d="M33 1040C35 990 60 950 85 925C170 855 220 790 265 720C285 670 295 600 297 560C305 510 350 470 420 445C480 425 560 430 610 465L700 520L875 650L925 685L1010 745C1060 790 1075 840 1072 880C1070 930 1030 990 950 1005C880 1020 760 1015 650 1030C550 1050 450 1095 375 1145C320 1180 260 1195 200 1190C130 1185 60 1140 40 1085Z" />

              <path fill="#686a80" d="M1085 265C1130 190 1200 130 1290 120C1330 130 1345 190 1335 230C1310 320 1250 420 1180 490L925 685L875 650L545 885C620 810 740 700 830 610C920 510 1010 370 1085 265Z" />
              <path fill="url(#armG)" d="M322 870L440 968L545 885C620 810 740 700 830 610C920 510 1010 370 1085 265L960 185C880 300 790 430 700 525C600 630 470 750 322 870Z" />
              <path fill="url(#capG)" d="M960 185C1000 130 1060 65 1130 44C1150 40 1165 42 1180 50L1295 120C1200 130 1130 190 1085 265Z" />
              <ellipse cx="1185" cy="330" rx="100" ry="54" transform="rotate(-50 1185 330)" fill="url(#boreG)" />
              <path d="M1212 247L1252 270" fill="none" strokeWidth="2.6" />

              <ellipse cx="487" cy="567" rx="65" ry="47" fill="url(#holeG)" />
              <ellipse cx="868" cy="856" rx="68" ry="52" fill="url(#holeG)" />
              <ellipse cx="243" cy="1020" rx="70" ry="56" fill="url(#holeG)" />
              <g clipPath="url(#h1)"><ellipse cx="487" cy="637" rx="65" ry="47" fill="#8f2750" /></g>
              <g clipPath="url(#h2)"><ellipse cx="868" cy="926" rx="68" ry="52" fill="#9a2652" /></g>
              <g clipPath="url(#h3)"><ellipse cx="243" cy="1090" rx="70" ry="56" fill="#a8264e" /></g>
              <path d="M538 540L545 590M915 820L918 880M298 990L304 1045" fill="none" strokeWidth="3" />
            </g>
          </Part>

          <HBar $l={536} $t={636} $w={560} $h={36}>
            <Corner $l={0} viewBox="0 0 13 9" shapeRendering="crispEdges"><path d="M1 8V1h11" fill="none" stroke="#1b1464" strokeWidth="2" /><path d="M3 8V3h9" fill="none" stroke="#fff" /></Corner>
            <Corner $l={184} viewBox="0 0 13 9" shapeRendering="crispEdges"><path d="M1 8V1h11" fill="none" stroke="#1b1464" strokeWidth="2" /><path d="M3 8V3h9" fill="none" stroke="#fff" /></Corner>
            <Corner $l={465} viewBox="0 0 13 9" shapeRendering="crispEdges"><path d="M1 8V1h11" fill="none" stroke="#1b1464" strokeWidth="2" /><path d="M3 8V3h9" fill="none" stroke="#fff" /></Corner>
            {renderRow(dockTools, 536)}
          </HBar>

          <Status>
            选择对象或命令
            <StatusField />
            <StatusSearch viewBox="0 0 14 11" shapeRendering="crispEdges"><rect x="1" y="1" width="6" height="5" fill="#8eb0e8" stroke="#50508a" /><path d="M7 6l5 4" stroke="#50508a" strokeWidth="2" /></StatusSearch>
          </Status>

          <Mark>
            <MarkLogo viewBox="0 0 74 84">
              <path d="M36 0l36 21v42L36 84 0 63V21z" fill="#b18cc4" fillOpacity=".88" />
              <path d="M48 7l24 14v42L50 76 36 84V70l20-12V26z" fill="#6070bc" fillOpacity=".95" />
              <path d="M0 52v11l36 21 20-12-1-7C38 76 14 72 0 52z" fill="#38a2dc" fillOpacity=".95" />
              <path d="M36 22l21 12v24L36 70 15 58V34z" fill="none" stroke="#9c2f80" strokeOpacity=".8" strokeWidth="1.2" />
              <path d="M36 27l17 10-17 10-17-10z" fill="#b08ac8" stroke="#9c2f80" strokeOpacity=".7" />
              <path d="M19 37l17 10v20L19 57z" fill="#9478c8" stroke="#9c2f80" strokeOpacity=".7" />
              <path d="M53 37L36 47v20l17-10z" fill="#566ec0" stroke="#9c2f80" strokeOpacity=".7" />
            </MarkLogo>
            <MarkName>3D<MarkCjk>世界网</MarkCjk></MarkName>
            <MarkUrl>WWW.3DSJW.COM</MarkUrl>
          </Mark>

          <Compass viewBox="0 0 46 30">
            <path d="M18 23L8 14M18 23V9M18 23L36 11" stroke="#fff" fill="none" />
            <text x="3" y="12" fontSize="11" fill="#fff" fontFamily="Liberation Sans, sans-serif">y</text>
            <text x="15" y="9" fontSize="11" fill="#fff" fontFamily="Liberation Sans, sans-serif">Z</text>
            <text x="35" y="11" fontSize="11" fill="#fff" fontFamily="Liberation Sans, sans-serif">x</text>
          </Compass>
          <Brand viewBox="0 0 44 34">
            <text x="11" y="15" fontSize="18" fontWeight="700" fontStyle="italic" fill="#d83020" fontFamily="Liberation Sans, sans-serif">3</text>
            <text x="3" y="24" fontSize="19" fontWeight="700" fontStyle="italic" fill="#fff" stroke="#1a1a50" strokeWidth="1" fontFamily="Liberation Sans, sans-serif">D</text>
            <text x="17" y="24" fontSize="19" fontWeight="700" fontStyle="italic" fill="#f0a020" stroke="#fff" strokeWidth=".4" fontFamily="Liberation Sans, sans-serif">S</text>
            <text x="5" y="33" fontSize="10.5" fontWeight="700" fontStyle="italic" fill="#fff" stroke="#1a1a50" strokeWidth="2" paintOrder="stroke" fontFamily="Liberation Sans, sans-serif" letterSpacing=".4">CATIA</text>
          </Brand>
          <Bubble>44</Bubble>
        </Viewport>
        <Strip><StripNote>经验分享</StripNote></Strip>
      </Main>
      <Taskbar>
        <TaskBlank />
        <TaskActive />
        <Clock>10:27</Clock>
      </Taskbar>
    </Page>
  );
}
